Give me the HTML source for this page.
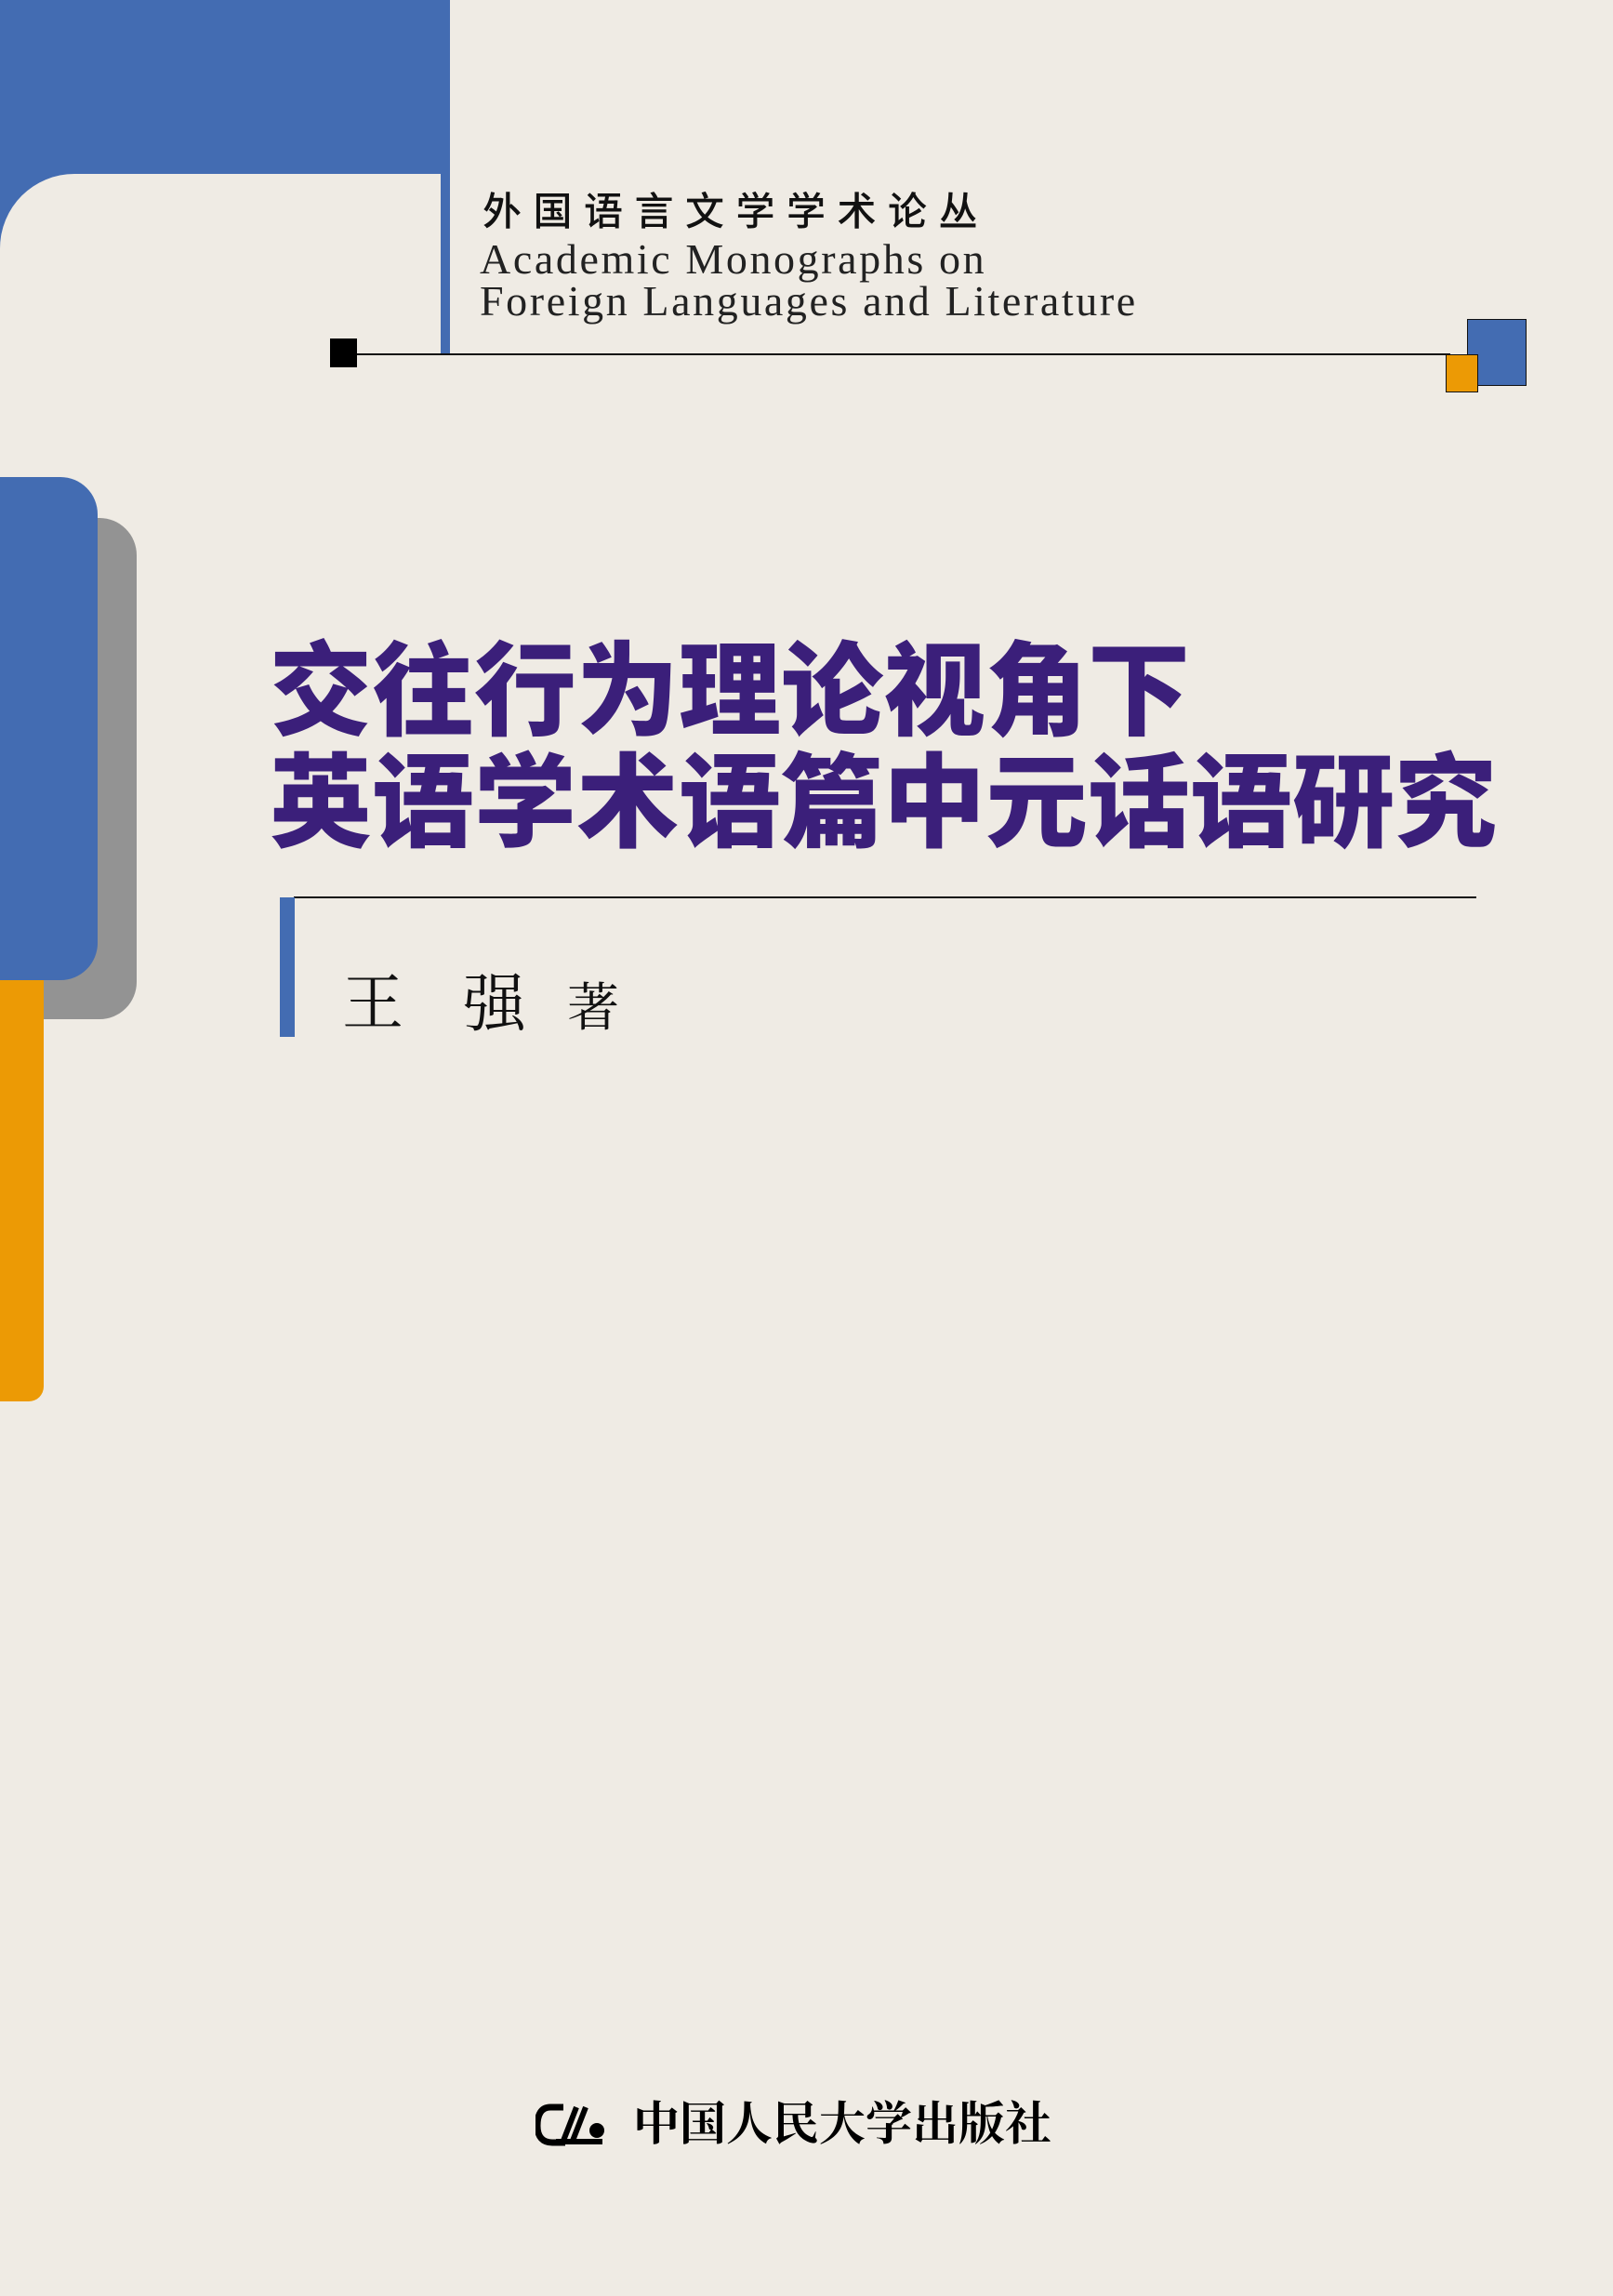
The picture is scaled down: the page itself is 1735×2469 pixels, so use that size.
<!DOCTYPE html>
<html><head><meta charset="utf-8"><style>
html,body{margin:0;padding:0}
body{width:1735px;height:2469px;position:relative;overflow:hidden;background:#efebe4;}
div{position:absolute}
.cjk{font-family:"Liberation Sans","Noto Sans CJK SC",sans-serif}
.serif{font-family:"Liberation Serif","Noto Serif CJK SC",serif}
</style></head><body>
<div style="left:0;top:0;width:484px;height:187px;background:#436cb2"></div>
<div style="left:0;top:187px;width:80px;height:80px;background:#436cb2"></div>
<div style="left:0;top:187px;width:474px;height:200px;background:#efebe4;border-top-left-radius:80px"></div>
<div style="left:474px;top:185px;width:10px;height:197px;background:#436cb2"></div>
<div class="cjk" style="left:519px;top:198px;font-size:42px;letter-spacing:12.5px;line-height:60px;color:#111;font-weight:500;white-space:nowrap">外国语言文学学术论丛</div>
<div class="serif" style="left:516px;top:256px;font-size:46px;letter-spacing:2.6px;line-height:45px;color:#222;white-space:nowrap">Academic Monographs on<br>Foreign Languages and Literature</div>
<div style="left:370px;top:380px;width:1190px;height:2px;background:#111"></div>
<div style="left:355px;top:364px;width:29px;height:31px;background:#000"></div>
<div style="left:1578px;top:343px;width:62px;height:70px;background:#436cb2;border:1px solid #111"></div>
<div style="left:1555px;top:381px;width:33px;height:39px;background:#ec9a05;border:1px solid #111"></div>
<div style="left:0;top:557px;width:147px;height:539px;background:#939393;border-radius:0 40px 40px 0"></div>
<div style="left:0;top:1030px;width:47px;height:477px;background:#ec9a05;border-radius:0 0 16px 0"></div>
<div style="left:0;top:513px;width:105px;height:541px;background:#436cb2;border-radius:0 40px 40px 0"></div>
<div class="cjk" style="left:290px;top:685px;font-size:110px;line-height:120px;font-weight:900;color:#3b1f7a;white-space:nowrap">交往行为理论视角下<br>英语学术语篇中元话语研究</div>
<div style="left:316px;top:964px;width:1272px;height:2px;background:#111"></div>
<div style="left:301px;top:965px;width:16px;height:150px;background:#436cb2"></div>
<div class="serif" style="left:368px;top:1040px;font-size:66px;line-height:80px;color:#111;white-space:nowrap">王</div>
<div class="serif" style="left:498px;top:1040px;font-size:68px;line-height:80px;color:#111;white-space:nowrap">强</div>
<div class="serif" style="left:610px;top:1052px;font-size:56px;line-height:66px;color:#111;white-space:nowrap">著</div>
<svg style="position:absolute;left:576px;top:2262px" width="78" height="46" viewBox="0 0 78 46">
<path d="M30 4 H16 C6 4 2 12 2 24 C2 36 8 42 18 42 H32" fill="none" stroke="#000" stroke-width="7"/>
<path d="M30 40 L44 4 M40 40 L54 4" stroke="#000" stroke-width="6"/>
<rect x="22" y="38" width="50" height="6" fill="#000"/>
<circle cx="66" cy="29" r="8" fill="#000"/>
</svg>
<div class="serif" style="left:681px;top:2254px;font-size:50px;line-height:60px;color:#000;font-weight:bold;white-space:nowrap">中国人民大学出版社</div>
</body></html>
